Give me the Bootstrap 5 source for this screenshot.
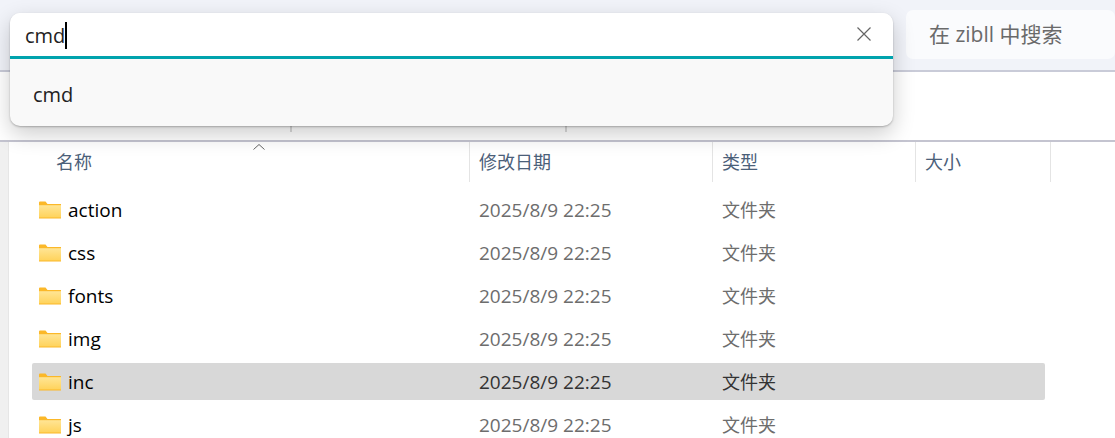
<!DOCTYPE html>
<html lang="zh-CN">
<head>
  <meta charset="UTF-8" />
  <meta name="viewport" content="width=device-width, initial-scale=1.0"/>
  <title>zibll</title>
  <link href="https://cdn.jsdelivr.net/npm/bootstrap@5.3.3/dist/css/bootstrap.min.css" rel="stylesheet" />
  <style>
    html, body { height: 438px; overflow: hidden; }
    body { background: #fff; font-family: "Open Sans", "Noto Sans CJK SC", sans-serif; font-size: 18px; color: #000; }
    .fx-top { height: 72px; background: #f1f3f9; padding: 10px 0 0 906px; border-bottom: 2px solid #c9cbd8; }
    .fx-find { height: 49px; background: #fafbfd; border-radius: 7px; padding-left: 23px; font-size: 21px; color: #6a6a6a; line-height: 49px; }
    .fx-tools { height: 70px; padding: 28px 0 0 290px; border-bottom: 2px solid #c4c4d0; }
    .fx-tools i { display: block; width: 2px; height: 32px; background: #d9d9d9; margin-right: 273px; }
    .fx-main { height: 296px; overflow: hidden; margin-left: 8px; border-left: 1px solid #e6e6e6; box-shadow: -8px 0 0 #f0f0f0; }
    .fx-cols, .fx-row { display: grid; grid-template-columns: 437px 243px 203px 135px; }
    .fx-cols { height: 40px; margin-left: 24px; color: #4b6079; }
    .fx-cols > div { display: flex; align-items: center; padding-left: 9px; border-right: 1px solid #e4e4e4; position: relative; }
    .fx-cols > div:first-child { padding-left: 23px; }
    .fx-sort { position: absolute; left: 219px; top: 1px; }
    .fx-list { padding: 9px 0 0 23px; display: flex; flex-direction: column; gap: 6px; }
    .fx-row { height: 37px; align-items: center; border-radius: 2px; color: #6d6d6d; width: 1013px; font-size: 19px; flex: none; }
    .fx-row > div { padding: 2px 0 0 10px; }
    .fx-row > .fx-name { display: flex; align-items: center; gap: 7px; color: #000; padding: 0 0 0 7px; }
    .fx-name span { padding-top: 2px; }
    .fx-kind { font-size: 18px; }
    .fx-row.fx-on { background: #d8d8d8; color: #333; }
    .fx-pop { position: absolute; left: 10px; top: 13px; width: 883px; height: 113px; background: #f9f9f9; border-radius: 10px; box-shadow: 0 8px 22px rgba(0,0,0,.2), 0 1px 2px rgba(0,0,0,.25); }
    .fx-input { height: 46px; background: #fff; border-radius: 10px 10px 0 0; border-bottom: 3px solid #00a3ad; padding: 2px 15px 0; font-size: 20px; color: #222; }
    .fx-caret { width: 2px; height: 27px; background: #000; }
    .fx-hit { padding: 21px 0 0 23px; font-size: 20px; line-height: 30px; color: #222; }
    .fx-x { margin-right: 6px; margin-top: -4px; }
  </style>
</head>
<body>

<!-- search bar -->
<div class="fx-top">
  <div class="fx-find">在 zibll 中搜索</div>
</div>

<!-- toolbar, mostly covered by the popup -->
<div class="fx-tools d-flex"><i></i><i></i></div>

<div class="fx-main">
  <div class="fx-cols">
    <div>名称<svg class="fx-sort" width="14" height="8" viewBox="0 0 14 8"><path d="M1.5 6.5 7 1.5l5.500 5" fill="none" stroke="#666" stroke-width="1"/></svg></div>
    <div>修改日期</div>
    <div>类型</div>
    <div>大小</div>
  </div>

  <div class="fx-list" id="rows"></div>
</div>

<!-- search popup -->
<div class="fx-pop">
  <div class="fx-input d-flex align-items-center">
    <span>cmd</span><span class="fx-caret"></span>
    <svg class="ms-auto fx-x" width="16" height="16" viewBox="0 0 16 16"><path d="M1.500 1.500l13 13M14.500 1.500l-13 13" stroke="#666" stroke-width="1.200" fill="none"/></svg>
  </div>
  <div class="fx-hit">cmd</div>
</div>

<script>
var folder = `<svg width="22" height="18" viewBox="0 0 22 18"><path d="M0 1.500A1 1 0 0 1 1 .5h5.500L8.500 3H22v14.500H0z" fill="#fbb829"/><path d="M0 4.200h22v12.300H0z" fill="url(#g)"/><defs><linearGradient id="g" x1="0" y1="0" x2="0" y2="1"><stop offset="0" stop-color="#ffe595"/><stop offset="1" stop-color="#ffd35c"/></linearGradient></defs></svg>`;
var names = ["action", "css", "fonts", "img", "inc", "js"];
document.getElementById("rows").innerHTML = names.map((n) => `
  <div class="fx-row ${n == "inc" ? "fx-on" : ""}">
    <div class="fx-name">${folder}<span>${n}</span></div>
    <div>2025/8/9 22:25</div>
    <div class="fx-kind">文件夹</div>
    <div></div>
  </div>`).join("");
</script>
<script src="https://cdn.jsdelivr.net/npm/bootstrap@5.3.3/dist/js/bootstrap.bundle.min.js"></script>
</body>
</html>
